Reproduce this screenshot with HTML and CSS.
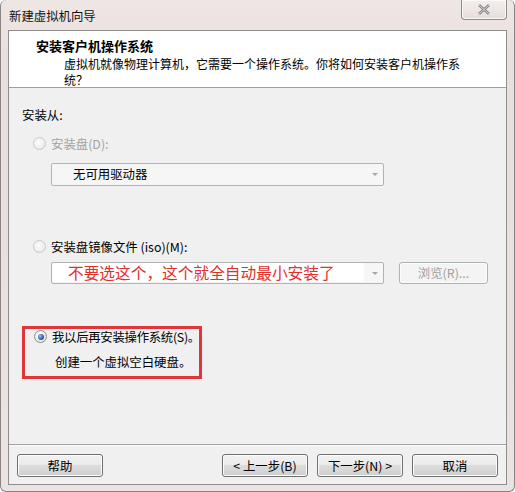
FILE: index.html
```html
<!DOCTYPE html>
<html lang="zh-CN">
<head>
    <meta charset="UTF-8">
    <title>新建虚拟机向导</title>
    <link rel="stylesheet" href="styles.css">
</head>
<body>
    <div class="window">
        <div class="titlebar">
            <span class="title">新建虚拟机向导</span>
            <div class="close">
                <svg width="14" height="11" viewBox="0 0 14 11">
                    <path d="M2 1 L12 10 M12 1 L2 10" stroke="#7c7c7c" stroke-width="2.4" fill="none"/>
                    <path d="M2 1 L12 10 M12 1 L2 10" stroke="#f4f4f4" stroke-width="0.8" fill="none"/>
                </svg>
            </div>
        </div>
        <div class="client">
            <div class="header">
                <div class="header-title">安装客户机操作系统</div>
                <div class="header-desc">虚拟机就像物理计算机，它需要一个操作系统。你将如何安装客户机操作系<br>统？</div>
            </div>
            <div class="content">
                <div class="label">安装从:</div>

                <div class="radio-row disabled first">
                    <span class="radio"></span>
                    <span>安装盘(D):</span>
                </div>
                <div class="combo drive">
                    <span class="combo-text">无可用驱动器</span>
                    <span class="arrow"></span>
                </div>

                <div class="radio-row iso">
                    <span class="radio"></span>
                    <span>安装盘镜像文件 (iso)(M):</span>
                </div>
                <div class="iso-row">
                    <div class="combo">
                        <span class="note">不要选这个，这个就全自动最小安装了</span>
                        <span class="arrow"></span>
                    </div>
                    <div class="btn browse">浏览(R)...</div>
                </div>

                <div class="marked">
                    <div class="radio-row later">
                        <span class="radio checked"></span>
                        <span>我以后再安装操作系统(S)。</span>
                    </div>
                    <div class="later-desc">创建一个虚拟空白硬盘。</div>
                </div>
            </div>
            <div class="footer">
                <div class="btn">帮助</div>
                <div class="spacer"></div>
                <div class="btn">&lt; 上一步(B)</div>
                <div class="btn">下一步(N) &gt;</div>
                <div class="btn cancel">取消</div>
            </div>
        </div>
    </div>
</body>
</html>
```

FILE: styles.css
```css
body, html {
    margin: 0;
    padding: 0;
    width: 515px;
    height: 492px;
    overflow: hidden;
    background: #ffffff;
    font-family: "Noto Sans CJK SC", "DejaVu Sans", sans-serif;
    font-size: 12.4px;
    color: #000;
}
.window {
    box-sizing: border-box;
    width: 515px;
    height: 492px;
    border: 1px solid #8a8482;
    border-top: none;
    border-radius: 6px 6px 6px 6px;
    background: linear-gradient(#efe7e5, #e9dfdd 60px, #ebe3e1);
    padding: 0 7px 6px 7px;
    display: flex;
    flex-direction: column;
}
.titlebar {
    height: 30px;
    display: flex;
    align-items: flex-start;
    justify-content: space-between;
}
.title {
    margin-top: 8px;
    margin-left: 1px;
    line-height: 16px;
    color: #111;
}
.close {
    box-sizing: border-box;
    width: 46px;
    height: 20px;
    border: 1px solid #8f8a89;
    border-top: none;
    border-radius: 0 0 4px 4px;
    background: linear-gradient(#f3eeed, #e6dedc);
    box-shadow: inset 0 0 0 1px #fbf8f8;
    display: flex;
    align-items: center;
    justify-content: center;
}
.client {
    box-sizing: border-box;
    height: 456px;
    width: 499px;
    border: 1px solid #8e8e8e;
    background: #f0f0f0;
    display: flex;
    flex-direction: column;
}
.header {
    box-sizing: border-box;
    height: 57px;
    background: #fff;
    border-bottom: 1px solid #a0a0a0;
    padding-top: 7px;
}
.header-title {
    font-weight: bold;
    font-size: 13px;
    line-height: 16px;
    margin-left: 27px;
}
.header-desc {
    margin-top: 2px;
    margin-left: 55px;
    font-size: 12px;
    line-height: 16px;
    white-space: nowrap;
}
.content {
    flex: 1;
    padding: 19px 0 0 13px;
}
.label {
    line-height: 16px;
}
.radio-row {
    display: flex;
    align-items: center;
    gap: 5px;
    line-height: 16px;
    margin-left: 11px;
    white-space: nowrap;
}
.radio-row.first {
    margin-top: 13px;
}
.radio-row.iso {
    margin-top: 53px;
}
.disabled {
    color: #a3a3a3;
}
.radio {
    box-sizing: border-box;
    width: 13px;
    height: 13px;
    flex: none;
    border-radius: 50%;
    border: 1px solid #c9c9c9;
    background: radial-gradient(circle at 40% 40%, #fdfdfd, #e4e4e4);
    display: flex;
    align-items: center;
    justify-content: center;
}
.radio.checked {
    border-color: #8b8b8b;
    background: radial-gradient(circle at 40% 40%, #ffffff, #dedede);
}
.radio.checked::after {
    content: "";
    width: 6px;
    height: 6px;
    border-radius: 50%;
    background: radial-gradient(circle at 35% 35%, #9fc1ee, #2a5aa8 60%, #173e80);
}
.combo {
    box-sizing: border-box;
    width: 333px;
    height: 23px;
    border: 1px solid #b3b3b3;
    border-radius: 2px;
    background: #f6f6f6;
    display: flex;
    align-items: center;
    position: relative;
}
.combo.drive {
    margin-top: 11px;
    margin-left: 29px;
}
.combo-text {
    margin-left: 21px;
}
.arrow {
    position: absolute;
    right: 5px;
    top: 9px;
    width: 0;
    height: 0;
    border-left: 3px solid transparent;
    border-right: 3px solid transparent;
    border-top: 3px solid #a8a8a8;
}
.iso-row {
    display: flex;
    gap: 15px;
    margin-top: 7px;
    margin-left: 29px;
}
.iso-row .combo {
    height: 22px;
}
.note {
    background: #fff;
    color: #e0302c;
    font-size: 15.7px;
    line-height: 19px;
    padding: 0 16px 0 15px;
    margin-left: 1px;
    width: 280px;
    white-space: nowrap;
}
.btn {
    box-sizing: border-box;
    width: 86px;
    height: 23px;
    border: 1px solid #707070;
    border-radius: 3px;
    background: linear-gradient(#f2f2f2 0%, #ebebeb 45%, #dddddd 50%, #cfcfcf 100%);
    box-shadow: inset 0 0 0 1px #fcfcfc;
    display: flex;
    align-items: center;
    justify-content: center;
    line-height: 16px;
}
.btn.browse {
    width: 89px;
    height: 22px;
    border-color: #adb2b5;
    background: #f4f4f4;
    color: #a0a0a0;
}
.marked {
    box-sizing: border-box;
    width: 180px;
    height: 53px;
    margin-top: 42px;
    border: 3px solid #e0353a;
    padding-top: 0;
}
.radio-row.later {
    margin-left: 9px;
    margin-top: 0;
    letter-spacing: -0.3px;
}
.later-desc {
    margin-top: 9px;
    margin-left: 30px;
    line-height: 16px;
    white-space: nowrap;
}
.footer {
    box-sizing: border-box;
    height: 40px;
    border-top: 1px solid #a0a0a0;
    box-shadow: inset 0 1px 0 #fdfdfd;
    padding: 9px 8px 0 8px;
    display: flex;
    gap: 9px;
}
.spacer {
    flex: 1;
}
```
